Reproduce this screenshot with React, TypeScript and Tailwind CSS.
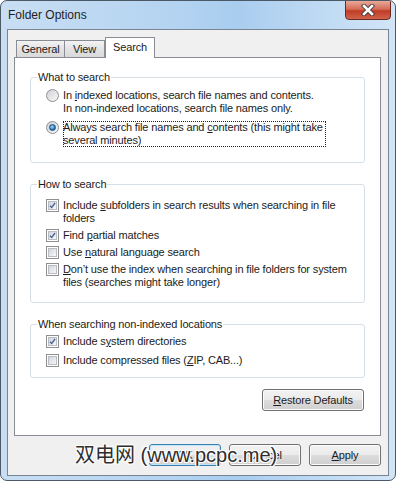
import React from 'react';

const Check: React.FC<{ checked?: boolean }> = ({ checked }) => (
  <span className="w-[13px] h-[13px] shrink-0 border border-[#8f8f8f] bg-white p-px">
    <span className="flex w-full h-full items-center justify-center border border-[#b8bcc4] bg-gradient-to-br from-[#d4d6da] to-[#f7f7f7]">
      {checked && (
        <svg width="9" height="9" viewBox="0 0 9 9">
          <path d="M1.2 4.6 L3.4 7 L7.8 1.3" fill="none" stroke="#4a5f94" strokeWidth="1.7" />
        </svg>
      )}
    </span>
  </span>
);

const Radio: React.FC<{ checked?: boolean }> = ({ checked }) => (
  <span className="w-[13px] h-[13px] shrink-0 rounded-full border border-[#8f8f8f] bg-gradient-to-br from-[#d0d2d6] to-[#f8f8f8] flex items-center justify-center">
    {checked && (
      <span className="w-[7px] h-[7px] rounded-full border border-[#1c4d82] bg-[radial-gradient(circle_at_40%_35%,#a9dcfb,#2b7cc4_60%,#174f8c)]" />
    )}
  </span>
);

const Row: React.FC<{ box: React.ReactNode; children: React.ReactNode; focus?: boolean }> = ({ box, children, focus }) => (
  <div className="flex items-start gap-[4px]">
    <div className="h-[13px] flex items-center">{box}</div>
    <div className={focus ? 'outline-1 outline-dotted outline-[#222] -outline-offset-1 pr-[3px]' : ''}>{children}</div>
  </div>
);

const Btn: React.FC<{ children: React.ReactNode; className?: string; primary?: boolean }> = ({ children, className = '', primary }) => (
  <div
    className={`h-[22px] rounded-[3px] border flex items-center justify-center bg-[linear-gradient(#f2f2f2,#ebebeb_50%,#dddddd_50%,#cfcfcf)] ${
      primary ? 'border-[#3c7fb1] shadow-[inset_0_0_0_1px_#bfe6fa]' : 'border-[#707070] shadow-[inset_0_0_0_1px_#fcfcfc]'
    } ${className}`}
  >
    {children}
  </div>
);

export default function App() {
  return (
    <div className="relative w-[396px] h-[481px] overflow-hidden rounded-[7px] border border-[#4b5866] bg-[linear-gradient(90deg,#c9def3,#b3d3f1_45%,#a9cdef_60%,#d2e5f7)] text-[11px] tracking-[-0.15px] text-[#1b1b1b] font-[family-name:Liberation_Sans,Arial,sans-serif]">
      {/* title bar */}
      <div className="h-[28px] flex items-start justify-between">
        <div className="pl-[7px] pt-[5px] text-[12px] tracking-normal text-[#1e1e1e]">Folder Options</div>
        <div className="mr-[4px] -mt-px w-[46px] h-[20px] rounded-b-[4px] border border-[#6b2a22] bg-[linear-gradient(#e9a99a,#d46d58_45%,#c13b24_55%,#d0634c)] flex items-center justify-center">
          <svg width="14" height="12" viewBox="0 0 14 12">
            <path d="M3 2 L11 10 M11 2 L3 10" stroke="#3a3a3a" strokeWidth="4.4" strokeLinecap="square" />
            <path d="M3 2 L11 10 M11 2 L3 10" stroke="#ffffff" strokeWidth="2.6" strokeLinecap="square" />
          </svg>
        </div>
      </div>

      {/* client area */}
      <div className="ml-[6px] w-[382px] h-[447px] border border-[#7a8593] bg-[#f0f0f0] flex flex-col">
        {/* tabs */}
        <div className="pl-[8px] pt-[6px] flex items-end h-[27px]">
          <div className="w-[49px] h-[17px] border border-b-0 border-[#898c95] bg-[linear-gradient(#f3f3f3,#e3e3e3_50%,#d9d9d9)] flex items-center justify-center">General</div>
          <div className="w-[40px] h-[17px] border border-b-0 border-l-0 border-[#898c95] bg-[linear-gradient(#f3f3f3,#e3e3e3_50%,#d9d9d9)] flex items-center justify-center">View</div>
          <div className="relative z-10 -mb-px w-[50px] h-[21px] border border-b-0 border-[#898c95] bg-white flex items-center justify-center pb-[2px]">Search</div>
        </div>

        {/* panel */}
        <div className="ml-[6px] w-[367px] h-[379px] border border-[#898c95] bg-white flex flex-col">
          <fieldset className="mt-[12px] mx-[15px] border border-[#d5dfe5] rounded-[3px]">
            <legend className="ml-[6px] px-[1px] leading-[15px]">What to search</legend>
            <div className="pl-[15px] pt-[4px] pb-[15px] leading-[13px] flex flex-col gap-[6px]">
              <Row box={<Radio />}>
                In <u className="underline-offset-[1px]">i</u>ndexed locations, search file names and contents.
                <br />
                In non-indexed locations, search file names only.
              </Row>
              <Row box={<Radio checked />} focus>
                Always search file names and <u className="underline-offset-[1px]">c</u>ontents (this might take
                <br />
                several minutes)
              </Row>
            </div>
          </fieldset>

          <fieldset className="mt-[14px] mx-[15px] border border-[#d5dfe5] rounded-[3px]">
            <legend className="ml-[6px] px-[1px] leading-[15px]">How to search</legend>
            <div className="pl-[15px] pt-[7px] pb-[13px] leading-[13px] flex flex-col gap-[4px]">
              <Row box={<Check checked />}>
                Include <u className="underline-offset-[1px]">s</u>ubfolders in search results when searching in file
                <br />
                folders
              </Row>
              <Row box={<Check checked />}>
                Find <u className="underline-offset-[1px]">p</u>artial matches
              </Row>
              <Row box={<Check />}>
                Use <u className="underline-offset-[1px]">n</u>atural language search
              </Row>
              <Row box={<Check />}>
                <u className="underline-offset-[1px]">D</u>on’t use the index when searching in file folders for system
                <br />
                files (searches might take longer)
              </Row>
            </div>
          </fieldset>

          <fieldset className="mt-[14px] mx-[15px] border border-[#d5dfe5] rounded-[3px]">
            <legend className="ml-[6px] px-[1px] leading-[15px]">When searching non-indexed locations</legend>
            <div className="pl-[15px] pt-[3px] pb-[10px] leading-[13px] flex flex-col gap-[6px]">
              <Row box={<Check checked />}>
                Include s<u className="underline-offset-[1px]">y</u>stem directories
              </Row>
              <Row box={<Check />}>
                Include compressed files (<u className="underline-offset-[1px]">Z</u>IP, CAB...)
              </Row>
            </div>
          </fieldset>

          <div className="mt-[11px] mr-[16px] flex justify-end">
            <Btn className="w-[102px]">
              <span>
                <u className="underline-offset-[1px]">R</u>estore Defaults
              </span>
            </Btn>
          </div>
        </div>

        {/* dialog buttons */}
        <div className="mt-[8px] pr-[7px] flex justify-end gap-[8px]">
          <Btn className="w-[72px]" primary>OK</Btn>
          <Btn className="w-[72px]">Cancel</Btn>
          <Btn className="w-[72px]">
            <span>
              <u className="underline-offset-[1px]">A</u>pply
            </span>
          </Btn>
        </div>
      </div>

      {/* watermark */}
      <div className="absolute left-[74px] top-[441px] text-[20px] leading-[26px] tracking-normal text-[#2e2e2e] whitespace-nowrap font-[family-name:Liberation_Sans,Noto_Sans_CJK_SC,sans-serif] [text-shadow:0_0_2px_#fff,0_0_2px_#fff,1px_1px_0_#fff,-1px_-1px_0_#fff,1px_-1px_0_#fff,-1px_1px_0_#fff]">
        双电网 (www.pcpc.me)
      </div>
    </div>
  );
}
